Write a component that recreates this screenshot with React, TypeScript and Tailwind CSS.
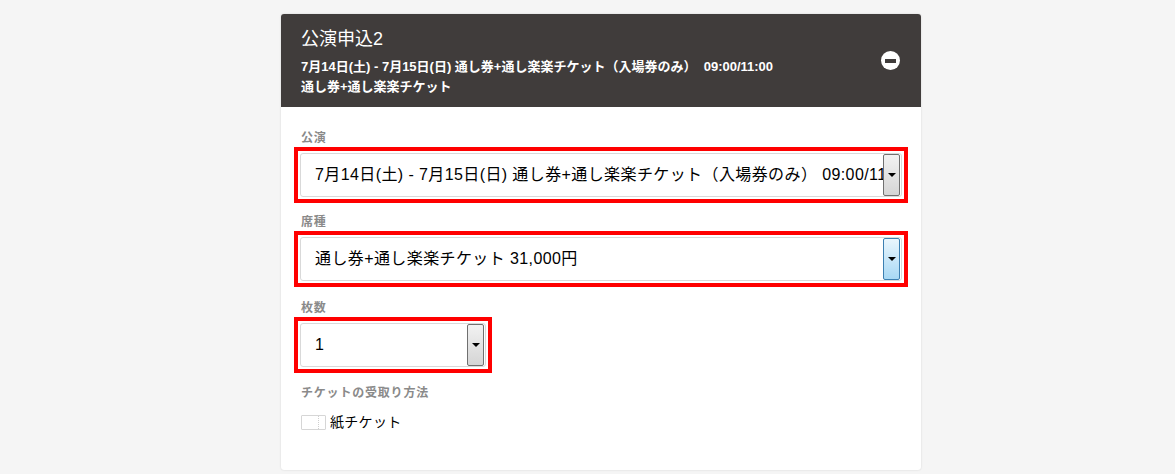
import React from "react";

const font = {
  fontFamily:
    '"Liberation Sans", Arial, "Noto Sans CJK JP", sans-serif',
};

function Arrow({ blue }: { blue?: boolean }) {
  return (
    <div
      className={
        "w-[17px] h-[42px] mr-[1px] rounded-[2px] border flex items-center justify-center shrink-0 " +
        (blue
          ? "border-[#3c7fb1] bg-gradient-to-b from-[#eaf6fd] to-[#a7d8f4]"
          : "border-[#707070] bg-gradient-to-b from-[#f2f2f2] to-[#d5d5d5]")
      }
    >
      <div className="w-0 h-0 border-l-[4px] border-r-[4px] border-t-[4px] border-l-transparent border-r-transparent border-t-black" />
    </div>
  );
}

function Select({
  text,
  blue,
  width,
}: {
  text: string;
  blue?: boolean;
  width: string;
}) {
  return (
    <div className={"border-[4px] border-[#ff0000] p-[2px] " + width}>
      <div className="h-[44px] rounded-[3px] border border-[#d9d9d9] bg-white flex items-center">
        <div className="flex-1 overflow-hidden whitespace-nowrap pl-[14px] pr-[2px] text-[16px] tracking-[0.4px] leading-[20px] text-black">
          {text}
        </div>
        <Arrow blue={blue} />
      </div>
    </div>
  );
}

function Label({ children }: { children: React.ReactNode }) {
  return (
    <div className="pl-[7px] text-[12px] tracking-[0.8px] leading-[16px] font-bold text-[#8a8a8a] h-[17px]">
      {children}
    </div>
  );
}

export default function App() {
  return (
    <div
      className="w-[1175px] h-[474px] bg-[#f5f5f5] overflow-hidden"
      style={font}
    >
      <div className="ml-[281px] mt-[14px] w-[640px] h-[456px] bg-white rounded-[3px] shadow-[0_0_2px_rgba(0,0,0,0.15)] overflow-hidden">
        <div className="h-[93px] bg-[#403c3b] px-[20px] pt-[15px] flex justify-between">
          <div className="text-white">
            <div className="text-[18px] leading-[20px] mb-[8px]">公演申込2</div>
            <div className="text-[13px] leading-[20px] font-bold">
              7月14日(土) - 7月15日(日) 通し券+通し楽楽チケット（入場券のみ）&nbsp;&nbsp;09:00/11:00
            </div>
            <div className="text-[13px] leading-[20px] font-bold">
              通し券+通し楽楽チケット
            </div>
          </div>
          <div className="pt-[22px] pr-[1px]">
            <div className="w-[19px] h-[19px] rounded-full bg-white flex items-center justify-center">
              <div className="w-[11px] h-[4px] bg-[#403c3b]" />
            </div>
          </div>
        </div>
        <div className="px-[13px] pt-[23px]">
          <Label>公演</Label>
          <Select
            width="w-[614px]"
            text="7月14日(土) - 7月15日(日) 通し券+通し楽楽チケット（入場券のみ） 09:00/11:00"
          />
          <div className="h-[11px]" />
          <Label>席種</Label>
          <Select width="w-[614px]" blue text="通し券+通し楽楽チケット 31,000円" />
          <div className="h-[13px]" />
          <Label>枚数</Label>
          <Select width="w-[198px]" text="1" />
          <div className="h-[12px]" />
          <Label>チケットの受取り方法</Label>
          <div className="flex items-center pl-[7px] mt-[10px]">
            <div className="w-[25px] h-[15px] border border-[#d6d6d6] rounded-[1px] flex">
              <div className="w-[17px] h-full border-r border-dotted border-[#cfcfcf]" />
            </div>
            <span className="ml-[4px] text-[14px] tracking-[0.3px] leading-[20px] text-black">紙チケット</span>
          </div>
        </div>
      </div>
    </div>
  );
}
